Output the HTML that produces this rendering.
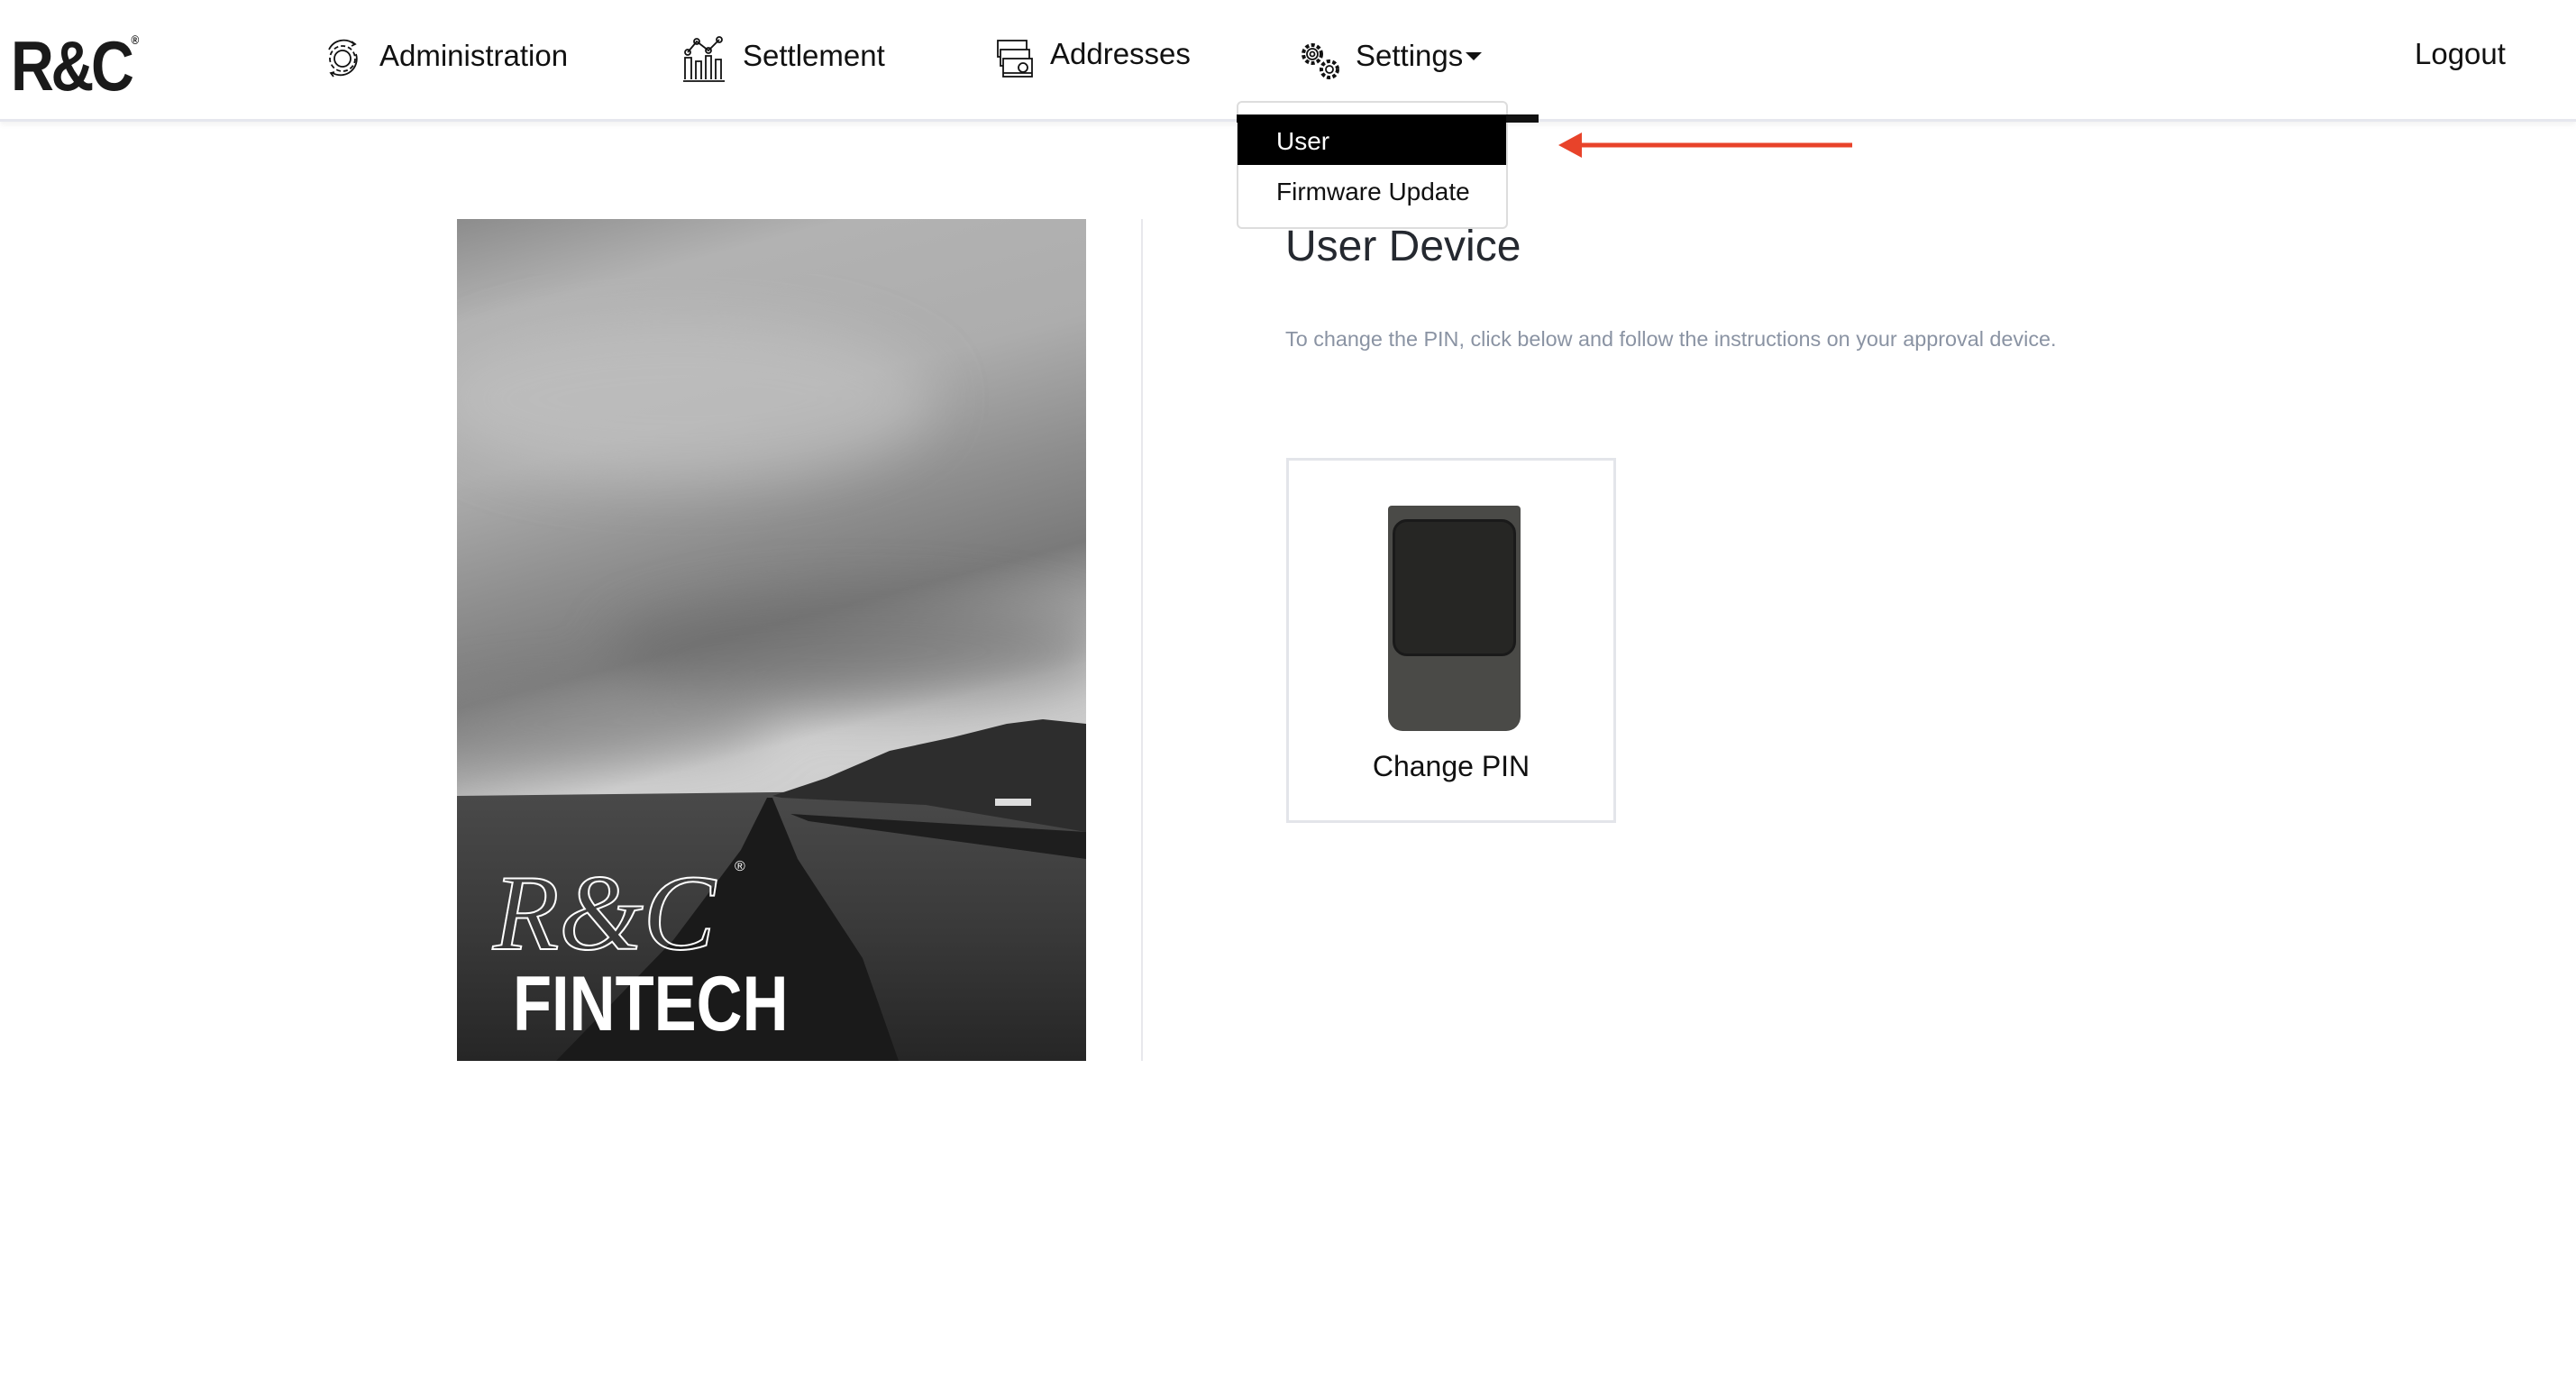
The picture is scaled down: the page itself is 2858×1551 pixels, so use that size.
<!DOCTYPE html>
<html><head><meta charset="utf-8"><style>
*{margin:0;padding:0;box-sizing:border-box}
body{width:2858px;height:1551px;background:#fff;font-family:"Liberation Sans",sans-serif;position:relative;overflow:hidden;color:#111}
.hdr{position:absolute;left:0;top:0;width:2858px;height:135px;background:#fff;border-bottom:3px solid #e6e7ee;box-shadow:0 3px 6px rgba(0,0,0,.06)}
.abs{position:absolute}
.nav{position:absolute;top:40px;font-size:33px;color:#111;line-height:44px}
.logo{position:absolute;left:12px;top:28px;font-size:78px;font-weight:bold;letter-spacing:-4px;color:#1a1a1a;transform:scaleX(.85);transform-origin:left}
</style></head><body>
<div class="hdr"></div>
<div class="logo">R&amp;C<sup style="font-size:14px;vertical-align:top;position:relative;top:8px;letter-spacing:0">®</sup></div>

<svg class="abs" style="left:355px;top:40px" width="50" height="50" viewBox="0 0 50 50" fill="none" stroke="#111" stroke-width="1.8">
<circle cx="25" cy="25" r="9"/><circle cx="25" cy="25" r="14" stroke-dasharray="5 3"/>
<path d="M10 15 A18 18 0 0 1 38 9 M40 20 A18 18 0 0 1 14 41 M35 6 l4 3 -4 2 M15 45 l-3 -4 4 -1"/></svg>
<div class="nav" style="left:421px">Administration</div>

<svg class="abs" style="left:756px;top:40px" width="50" height="52" viewBox="0 0 50 52" fill="none" stroke="#111" stroke-width="1.8">
<path d="M2 50 H48 M4 48 V24 H11 V48 M16 48 V28 H22 V48 M27 48 V22 H33 V48 M38 48 V26 H44 V48 M7 18 L17 6 L30 16 L42 4"/>
<circle cx="7" cy="18" r="3"/><circle cx="17" cy="6" r="3"/><circle cx="30" cy="16" r="3"/><circle cx="42" cy="4" r="3"/></svg>
<div class="nav" style="left:824px">Settlement</div>

<svg class="abs" style="left:1105px;top:43px" width="42" height="44" viewBox="0 0 42 44" fill="none" stroke="#111" stroke-width="1.8">
<rect x="2" y="2" width="32" height="18"/><rect x="5" y="12" width="32" height="18" fill="#fff"/><rect x="8" y="22" width="32" height="20" fill="#fff"/><circle cx="30" cy="32" r="5"/><path d="M8 38 H40"/></svg>
<div class="nav" style="left:1165px;top:38px">Addresses</div>

<svg class="abs" style="left:1438px;top:42px" width="52" height="50" viewBox="0 0 52 50" fill="none" stroke="#111" stroke-width="1.8">
<circle cx="18" cy="18" r="10" stroke-dasharray="4 2.5" stroke-width="4"/><circle cx="18" cy="18" r="6"/><circle cx="18" cy="18" r="2.5"/>
<circle cx="37" cy="35" r="9" stroke-dasharray="4 2.5" stroke-width="4"/><circle cx="37" cy="35" r="4"/></svg>
<div class="nav" style="left:1504px">Settings</div>
<div class="abs" style="left:1626px;top:58px;width:0;height:0;border-left:9px solid transparent;border-right:9px solid transparent;border-top:9px solid #111"></div>

<div class="nav" style="left:2679px;top:38px">Logout</div>

<div class="abs" style="left:1372px;top:112px;width:301px;height:142px;border:2px solid #ddd;border-radius:6px;background:#fff"></div>
<div class="abs" style="left:1372px;top:127px;width:335px;height:9px;background:#111"></div>
<div class="abs" style="left:1373px;top:128px;width:298px;height:55px;background:#000;color:#fff;font-size:28px;line-height:58px;padding-left:43px">User</div>
<div class="abs" style="left:1416px;top:193px;font-size:28px;line-height:40px;color:#111">Firmware Update</div>

<svg class="abs" style="left:1725px;top:143px" width="335" height="36"><path d="M330 18 H30" stroke="#e8432a" stroke-width="5"/><path d="M4 18 L30 4 L30 32 Z" fill="#e8432a"/></svg>

<svg class="abs" style="left:507px;top:243px" width="698" height="934" viewBox="0 0 698 934">
<defs>
<linearGradient id="sky" x1="0" y1="0" x2="0.2" y2="1">
<stop offset="0" stop-color="#8c8c8c"/><stop offset=".12" stop-color="#b2b2b2"/><stop offset=".3" stop-color="#adadad"/><stop offset=".45" stop-color="#8e8e8e"/><stop offset=".56" stop-color="#7a7a7a"/><stop offset=".64" stop-color="#a8a8a8"/><stop offset=".7" stop-color="#d2d2d2"/><stop offset="1" stop-color="#c0c0c0"/></linearGradient>
<linearGradient id="land" x1="0" y1="0" x2="0" y2="1"><stop offset="0" stop-color="#4a4a4a"/><stop offset=".5" stop-color="#3a3a3a"/><stop offset="1" stop-color="#262626"/></linearGradient>
<filter id="b"><feGaussianBlur stdDeviation="30"/></filter>
</defs>
<rect width="698" height="934" fill="url(#sky)"/>
<g filter="url(#b)" opacity=".6">
<ellipse cx="250" cy="200" rx="280" ry="90" fill="#c4c4c4"/>
<ellipse cx="450" cy="480" rx="280" ry="60" fill="#6a6a6a"/>
<ellipse cx="150" cy="560" rx="200" ry="40" fill="#888"/>
</g>
<path d="M0 640 L698 632 L698 934 L0 934 Z" fill="url(#land)"/>
<path d="M350 640 L410 620 L480 590 L550 575 L610 560 L650 555 L698 560 L698 680 L520 650 L360 642 Z" fill="#2d2d2d"/>
<path d="M370 660 L698 680 L698 710 L390 668 Z" fill="#1e1e1e"/>
<path d="M344 642 L350 642 L378 710 L450 820 L490 934 L110 934 L240 800 L315 700 Z" fill="#1a1a1a"/>
<rect x="597" y="643" width="40" height="8" fill="#ddd"/>
<text x="40" y="810" font-family="Liberation Serif,serif" font-style="italic" font-size="120" fill="none" stroke="#fff" stroke-width="2">R&amp;C</text>
<text x="308" y="723" font-size="16" fill="#fff">®</text>
<text x="62" y="900" font-family="Liberation Sans,sans-serif" font-weight="bold" font-size="86" fill="#fff" transform="translate(62 0) scale(.82 1) translate(-62 0)">FINTECH</text>
</svg>
<div class="abs" style="left:1266px;top:243px;width:2px;height:934px;background:#e8e8ec"></div>

<div class="abs" style="left:1426px;top:244px;font-size:48px;color:#252930;line-height:60px">User Device</div>
<div class="abs" style="left:1426px;top:361px;font-size:23.4px;color:#8a93a3;line-height:30px">To change the PIN, click below and follow the instructions on your approval device.</div>

<div class="abs" style="left:1427px;top:508px;width:366px;height:405px;border:3px solid #e3e5ea"></div>
<div class="abs" style="left:1540px;top:561px;width:147px;height:250px;background:#4a4a47;border-radius:4px 4px 16px 16px"></div>
<div class="abs" style="left:1545px;top:576px;width:137px;height:152px;background:#262624;border:3px solid #1a1a1a;border-radius:16px"></div>
<div class="abs" style="left:1427px;top:832px;width:366px;text-align:center;font-size:32px;color:#111">Change PIN</div>
</body></html>
